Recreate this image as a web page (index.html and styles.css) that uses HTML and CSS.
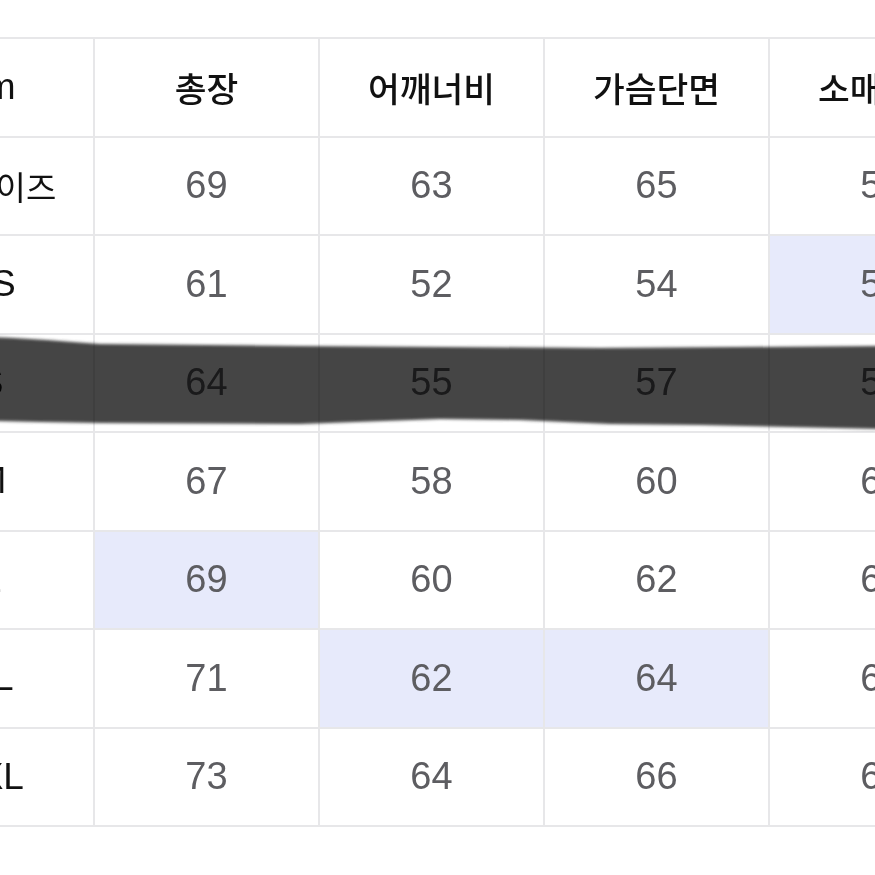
FILE: index.html
```html
<!DOCTYPE html>
<html lang="ko">
<head>
<meta charset="utf-8">
<title>사이즈표</title>
<link rel="stylesheet" href="styles.css">
</head>
<body>
<div class="page">
  <table class="chart">
    <colgroup>
      <col class="c-label">
      <col class="c-val"><col class="c-val"><col class="c-val"><col class="c-val">
    </colgroup>
    <thead>
      <tr>
        <th class="label">cm</th>
        <th>총장</th>
        <th>어깨너비</th>
        <th>가슴단면</th>
        <th>소매길이</th>
      </tr>
    </thead>
    <tbody>
      <tr><td class="label ko">내 사이즈</td><td>69</td><td>63</td><td>65</td><td>59</td></tr>
      <tr><td class="label">XS</td><td>61</td><td>52</td><td>54</td><td class="hl">56</td></tr>
      <tr><td class="label">S</td><td>64</td><td>55</td><td>57</td><td>58</td></tr>
      <tr><td class="label">M</td><td>67</td><td>58</td><td>60</td><td>60</td></tr>
      <tr><td class="label">L</td><td class="hl">69</td><td>60</td><td>62</td><td>62</td></tr>
      <tr><td class="label">XL</td><td>71</td><td class="hl">62</td><td class="hl">64</td><td>64</td></tr>
      <tr><td class="label">2XL</td><td>73</td><td>64</td><td>66</td><td>66</td></tr>
    </tbody>
  </table>
  <svg class="brush" width="875" height="110" viewBox="0 0 875 110" aria-hidden="true">
    <defs>
      <filter id="soft" x="-5%" y="-20%" width="110%" height="140%">
        <feGaussianBlur stdDeviation="1.6"/>
      </filter>
    </defs>
    <path filter="url(#soft)" fill="#454545"
      d="M-10 6 C 30 7, 60 10, 100 13 L 300 15 L 600 17 L 880 15 L 880 98 L 700 94 L 610 93 L 520 89 L 440 88 L 300 93 L 100 92 L 40 91 L -10 90 Z"/>
  </svg>
</div>
</body>
</html>
```

FILE: styles.css
```css
html, body {
  margin: 0;
  padding: 0;
  background: #ffffff;
}

.page {
  position: relative;
  width: 875px;
  height: 875px;
  overflow: hidden;
  padding-top: 37px;
  box-sizing: border-box;
}

.chart {
  margin-left: -113px;
  border-collapse: collapse;
  table-layout: fixed;
  width: 1106px;
  font-family: "Liberation Sans", "Noto Sans CJK KR", sans-serif;
}

.c-label { width: 206px; }
.c-val { width: 225px; }

.chart tr {
  height: 98.5px;
}

.chart th,
.chart td {
  border: 2px solid #e7e7e9;
  text-align: center;
  vertical-align: middle;
  padding: 0;
}

.chart th {
  font-family: "Noto Sans CJK KR", "Liberation Sans", sans-serif;
  font-weight: 500;
  font-size: 34.5px;
  color: #111111;
}

.chart td {
  font-size: 38px;
  color: #5d5d61;
}

.chart .label {
  color: #111111;
  font-family: "Liberation Sans", "Noto Sans CJK KR", sans-serif;
  font-size: 37px;
  font-weight: 400;
}

.chart .label.ko {
  font-family: "Noto Sans CJK KR", sans-serif;
  font-size: 33px;
}

.chart .hl {
  background: #e7eafb;
}

.brush {
  position: absolute;
  left: 0;
  top: 331px;
  mix-blend-mode: multiply;
}
```
